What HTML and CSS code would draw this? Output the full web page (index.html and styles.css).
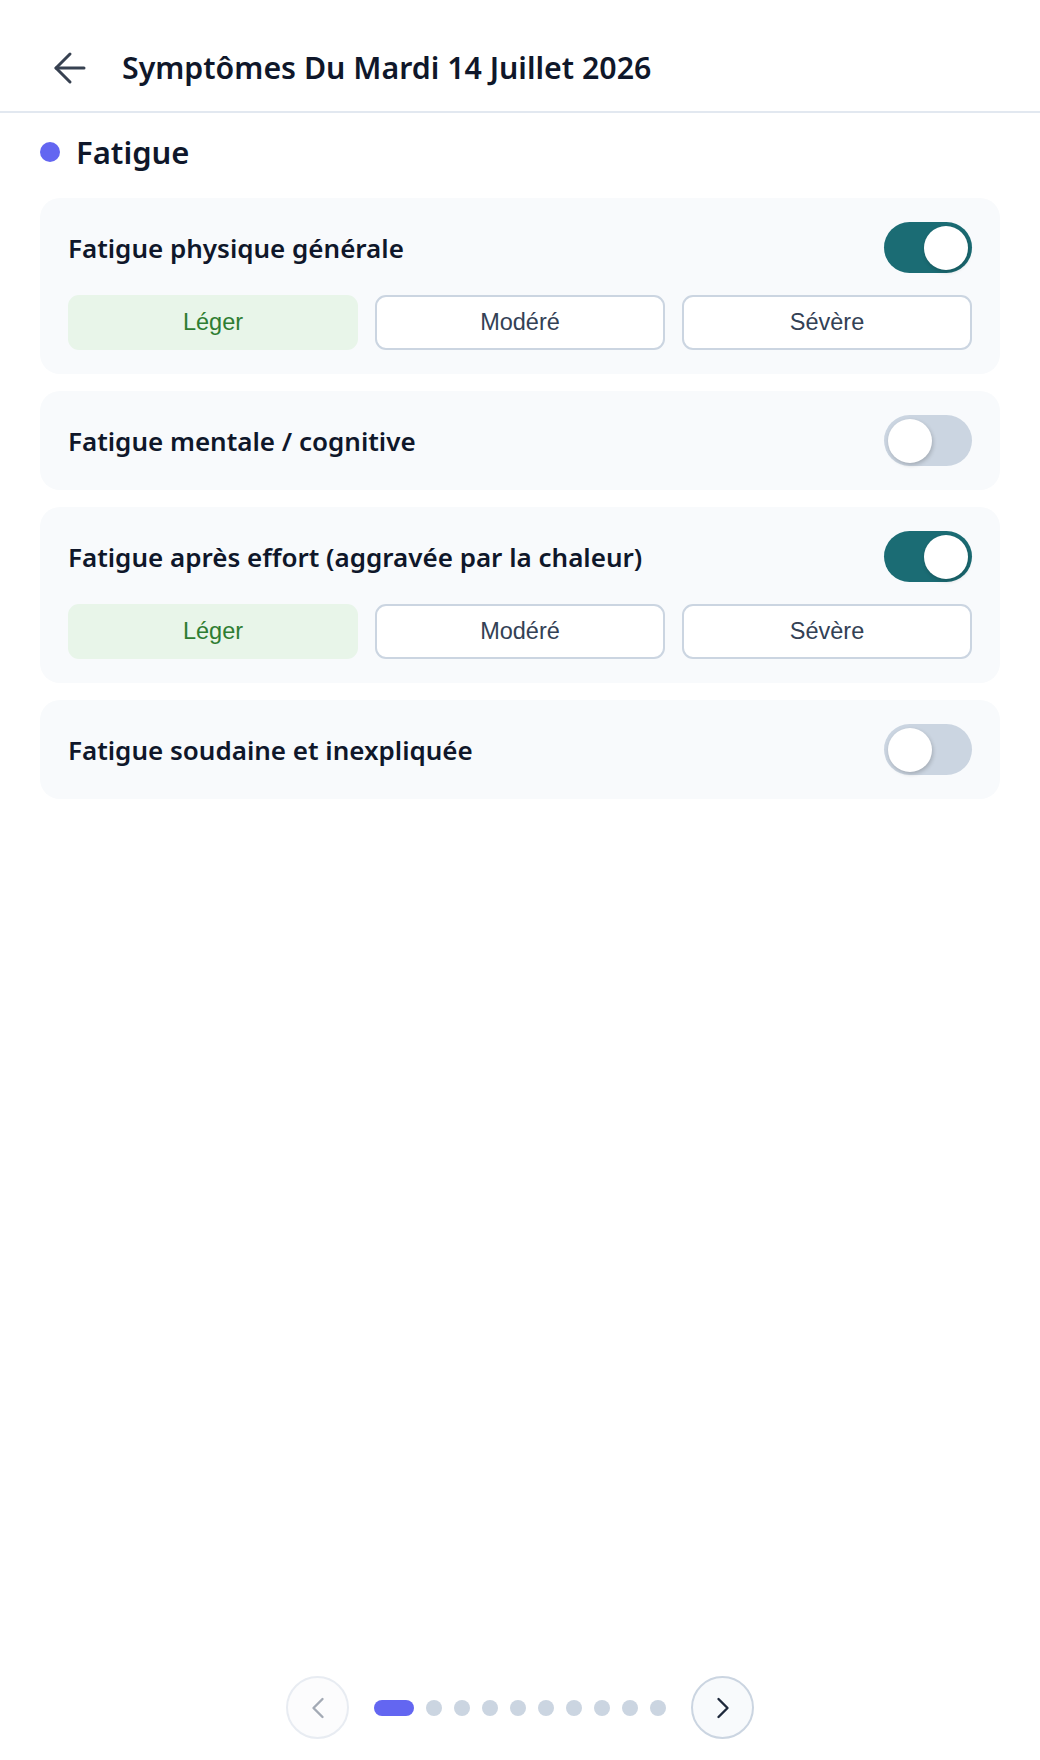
FILE: index.html
```html
<!DOCTYPE html>
<html lang="fr">
<head>
    <meta charset="UTF-8">
    <meta name="viewport" content="width=device-width, initial-scale=1.0">
    <title>Symptômes</title>
    <link rel="stylesheet" href="styles.css">
</head>
<body>
    <div class="page">
        <header class="top-bar">
            <button class="back-btn" aria-label="Retour">
                <svg width="48" height="48" viewBox="0 0 24 24" fill="none" stroke="currentColor" stroke-width="1.5" stroke-linecap="round" stroke-linejoin="round">
                    <path d="m12 19-7-7 7-7"/>
                    <path d="M19 12H5"/>
                </svg>
            </button>
            <h1 class="page-title">Symptômes Du Mardi 14 Juillet 2026</h1>
        </header>

        <main class="content">
            <h2 class="section-title"><span class="section-dot"></span>Fatigue</h2>

            <div class="symptom-card">
                <div class="symptom-row">
                    <span class="symptom-name">Fatigue physique générale</span>
                    <span class="toggle on"><span class="knob"></span></span>
                </div>
                <div class="levels">
                    <button class="level selected">Léger</button>
                    <button class="level">Modéré</button>
                    <button class="level">Sévère</button>
                </div>
            </div>

            <div class="symptom-card">
                <div class="symptom-row">
                    <span class="symptom-name">Fatigue mentale / cognitive</span>
                    <span class="toggle"><span class="knob"></span></span>
                </div>
            </div>

            <div class="symptom-card">
                <div class="symptom-row">
                    <span class="symptom-name">Fatigue après effort (aggravée par la chaleur)</span>
                    <span class="toggle on"><span class="knob"></span></span>
                </div>
                <div class="levels">
                    <button class="level selected">Léger</button>
                    <button class="level">Modéré</button>
                    <button class="level">Sévère</button>
                </div>
            </div>

            <div class="symptom-card">
                <div class="symptom-row">
                    <span class="symptom-name">Fatigue soudaine et inexpliquée</span>
                    <span class="toggle"><span class="knob"></span></span>
                </div>
            </div>
        </main>

        <footer class="pager">
            <button class="nav-btn disabled" aria-label="Précédent">
                <svg width="36" height="36" viewBox="0 0 24 24" fill="none" stroke="currentColor" stroke-width="1.6" stroke-linecap="round" stroke-linejoin="round">
                    <path d="m15 18-6-6 6-6"/>
                </svg>
            </button>
            <div class="dots">
                <span class="dot active"></span>
                <span class="dot"></span>
                <span class="dot"></span>
                <span class="dot"></span>
                <span class="dot"></span>
                <span class="dot"></span>
                <span class="dot"></span>
                <span class="dot"></span>
                <span class="dot"></span>
                <span class="dot"></span>
            </div>
            <button class="nav-btn" aria-label="Suivant">
                <svg width="36" height="36" viewBox="0 0 24 24" fill="none" stroke="currentColor" stroke-width="1.6" stroke-linecap="round" stroke-linejoin="round">
                    <path d="m9 18 6-6-6-6"/>
                </svg>
            </button>
        </footer>
    </div>
</body>
</html>
```

FILE: styles.css
```css
body {
    margin: 0;
    background-color: #fff;
    font-family: "Noto Sans", "Open Sans", sans-serif;
    color: #0f172a;
}
.page {
    display: flex;
    flex-direction: column;
    min-height: 100vh;
}
.top-bar {
    display: flex;
    align-items: center;
    height: 87px;
    padding: 24px 46px 0;
    border-bottom: 2px solid #e2e8f0;
}
.back-btn {
    display: flex;
    padding: 0;
    margin-right: 28px;
    border: none;
    background: none;
    color: #374151;
    cursor: pointer;
}
.page-title {
    margin: 0;
    font-size: 30.3px;
    font-weight: 600;
    line-height: 40px;
}
.content {
    padding: 0 40px;
}
.section-title {
    display: flex;
    align-items: center;
    margin: 18px 0 25px;
    font-size: 31px;
    font-weight: 600;
    line-height: 42px;
}
.section-dot {
    width: 20px;
    height: 20px;
    border-radius: 50%;
    background-color: #6366f1;
    margin-right: 16px;
}
.symptom-card {
    background-color: #f8fafc;
    border-radius: 20px;
    padding: 24px 28px;
    margin-bottom: 17px;
}
.symptom-row {
    display: flex;
    align-items: center;
    justify-content: space-between;
}
.symptom-name {
    font-size: 26px;
    font-weight: 600;
    line-height: 34px;
}
.toggle {
    position: relative;
    width: 88px;
    height: 51px;
    border-radius: 26px;
    background-color: #cbd5e1;
}
.toggle.on {
    background-color: #1b6c74;
}
.knob {
    position: absolute;
    top: 3.5px;
    left: 4px;
    width: 44px;
    height: 44px;
    border-radius: 50%;
    background-color: #fff;
    box-shadow: 1px 2px 4px rgba(0, 0, 0, 0.2);
}
.toggle.on .knob {
    left: 40px;
}
.levels {
    display: grid;
    grid-template-columns: repeat(3, 1fr);
    gap: 17px;
    margin-top: 22px;
}
.level {
    height: 55px;
    border: 2px solid #cbd5e1;
    border-radius: 11px;
    background-color: #fff;
    color: #334155;
    font-family: "Liberation Sans", Arial, sans-serif;
    font-size: 23.5px;
    cursor: pointer;
}
.level.selected {
    border-color: #e8f5e9;
    background-color: #e8f5e9;
    color: #2e7d32;
}
.pager {
    display: flex;
    align-items: center;
    justify-content: center;
    gap: 25px;
    margin-top: auto;
    padding-bottom: 21px;
}
.nav-btn {
    display: flex;
    align-items: center;
    justify-content: center;
    width: 63px;
    height: 63px;
    padding: 0;
    border: 2px solid #cbd5e1;
    border-radius: 50%;
    background-color: #f8fafc;
    color: #1e293b;
    cursor: pointer;
}
.nav-btn.disabled {
    border-color: #e8ecf2;
    background-color: #fcfcfd;
    color: #a3aab5;
    cursor: default;
}
.dots {
    display: flex;
    align-items: center;
    gap: 12px;
}
.dot {
    width: 16px;
    height: 16px;
    border-radius: 8px;
    background-color: #cbd5e1;
}
.dot.active {
    width: 40px;
    background-color: #6366f1;
}
```
